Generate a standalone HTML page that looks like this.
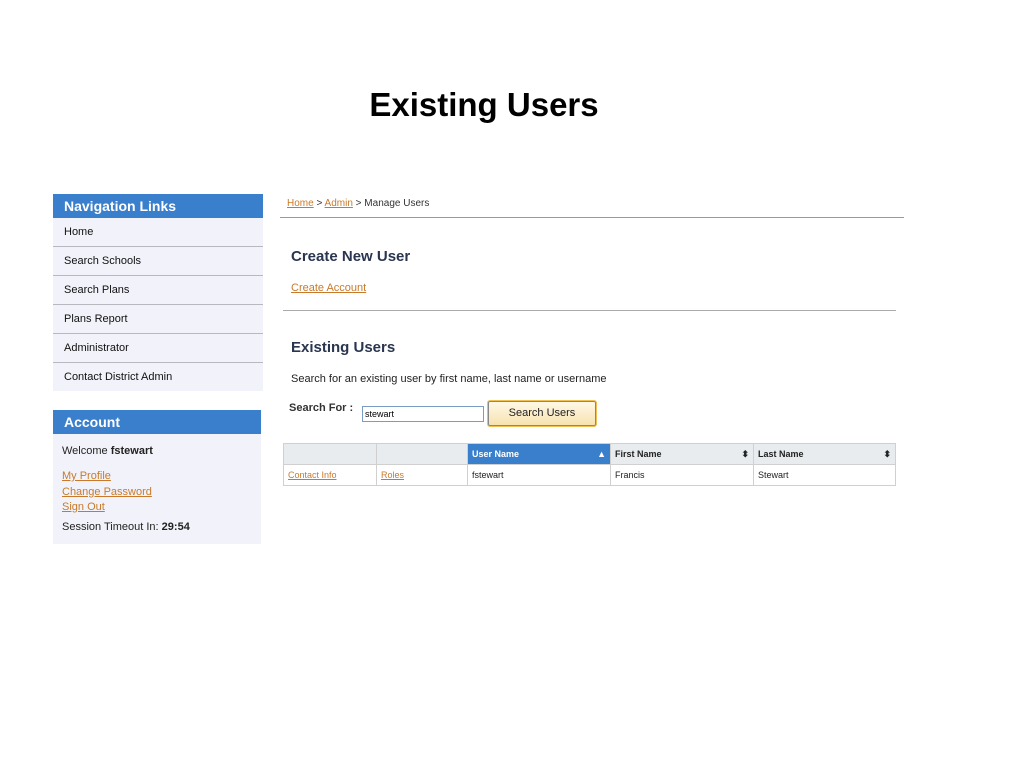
<!DOCTYPE html>
<html><head><meta charset="utf-8"><style>
body{margin:0;width:1024px;height:768px;background:#fff;font-family:"Liberation Sans",sans-serif;position:relative;overflow:hidden}
.a{position:absolute}
.t{font-size:11px;color:#222}
.lnk{color:#c87a2a;text-decoration:underline;font-size:11px}
.hd{background:#3a7fcb;color:#fff;font-size:14px;font-weight:bold;line-height:24px;padding-left:11px}
.nav div{height:28px;border-bottom:1px solid #b8b8c0;font-size:11px;line-height:28px;padding-left:11px;color:#111}
h2{margin:0;font-size:15px;color:#2a3550;font-weight:bold}
table{border-collapse:collapse}
td{border:1px solid #d0d0d0;font-size:9px;height:20px;padding:0 4px;color:#222}
</style></head><body>
<div class="a" style="left:0;width:968px;top:86px;text-align:center;font-size:33px;font-weight:bold;color:#000;">Existing Users</div>

<div class="a" style="left:53px;top:194px;width:210px;background:#f2f3fa">
<div class="hd">Navigation Links</div>
<div class="nav">
<div>Home</div><div>Search Schools</div><div>Search Plans</div><div>Plans Report</div><div>Administrator</div><div style="border:none">Contact District Admin</div>
</div></div>

<div class="a" style="left:53px;top:410px;width:208px;height:134px;background:#f2f3fa">
<div class="hd">Account</div>
<div class="a t" style="left:9px;top:35px">Welcome <b>fstewart</b></div>
<div class="a" style="left:9px;top:58px;line-height:14.5px"><span class="lnk">My Profile</span><br><span class="lnk">Change Password</span><br><span class="lnk">Sign Out</span></div>
<div class="a t" style="left:9px;top:111px">Session Timeout In: <b>29:54</b></div>
</div>

<div class="a" style="left:287px;top:198px;font-size:10px;color:#333"><span class="lnk" style="font-size:10px">Home</span> &gt; <span class="lnk" style="font-size:10px">Admin</span> &gt; Manage Users</div>
<div class="a" style="left:280px;top:217px;width:624px;height:1px;background:#999"></div>
<h2 class="a" style="left:291px;top:248px">Create New User</h2>
<div class="a lnk" style="left:291px;top:282px">Create Account</div>
<div class="a" style="left:283px;top:310px;width:613px;height:1px;background:#aaa"></div>
<h2 class="a" style="left:291px;top:339px">Existing Users</h2>
<div class="a t" style="left:291px;top:373px">Search for an existing user by first name, last name or username</div>
<div class="a t" style="left:289px;top:402px;font-weight:bold;color:#333">Search For :</div>
<div class="a" style="left:362px;top:406px;width:118px;height:14px;border:1px solid #7a9cc4;font-size:9px;line-height:14px;padding-left:2px">stewart</div>
<div class="a" style="left:488px;top:401px;width:106px;height:23px;border:1px solid #888;border-radius:2px;background:linear-gradient(#fff8e6,#f7e3b0);box-shadow:0 0 0 1px #f0c050;font-size:11px;text-align:center;line-height:23px;color:#222">Search Users</div>

<table class="a" style="left:283px;top:443px;width:613px">
<tr style="background:#e9ecef">
<td style="width:84px"></td><td style="width:82px"></td>
<td style="width:134px;background:#3a7fcb;color:#fff;font-weight:bold">User Name<span style="float:right">▲</span></td>
<td style="width:134px;font-weight:bold">First Name<span style="float:right">⬍</span></td>
<td style="font-weight:bold">Last Name<span style="float:right">⬍</span></td></tr>
<tr><td><span class="lnk" style="font-size:9px">Contact Info</span></td><td><span class="lnk" style="font-size:9px">Roles</span></td><td>fstewart</td><td>Francis</td><td>Stewart</td></tr>
</table>
</body></html>
